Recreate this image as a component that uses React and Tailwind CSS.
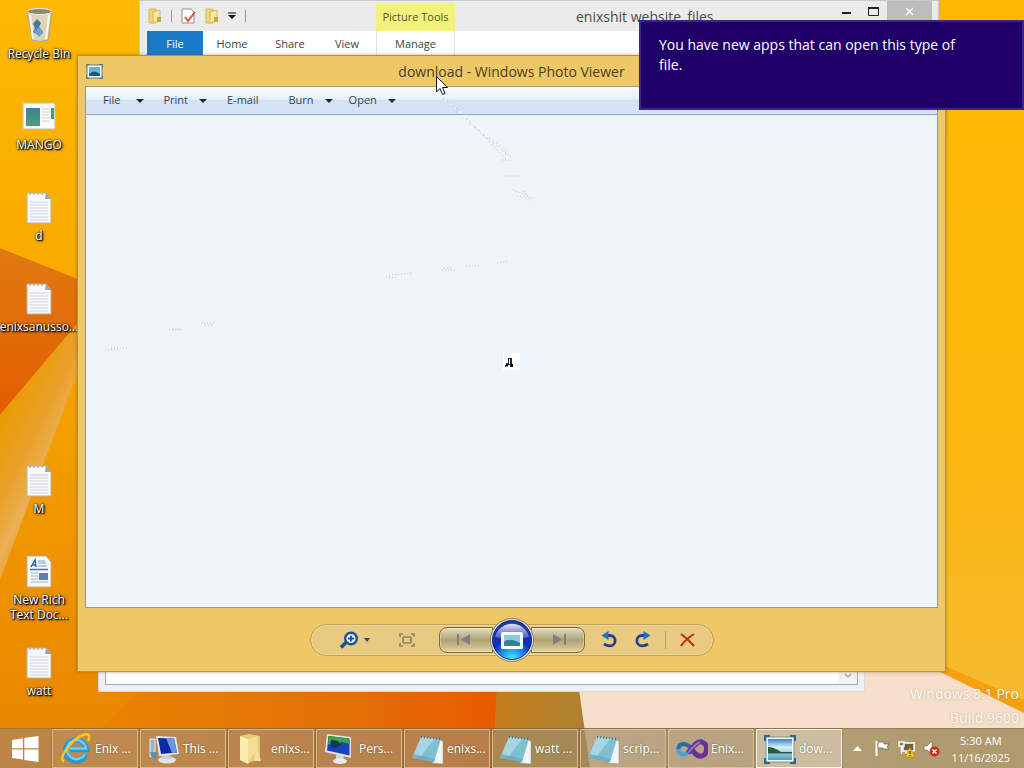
import React from "react";

const Wallpaper = () => (
  <svg
    className="absolute inset-0 h-full w-full"
    viewBox="0 0 1024 768"
    preserveAspectRatio="none"
    aria-hidden="true"
  >
    <defs>
      <linearGradient id="wallBase" x1="0" y1="0" x2="0" y2="1">
        <stop offset="0" stopColor="#feb900" />
        <stop offset="0.45" stopColor="#f7a600" />
        <stop offset="0.75" stopColor="#ee9200" />
        <stop offset="1" stopColor="#e98400" />
      </linearGradient>
      <linearGradient id="wallDark" x1="0" y1="0" x2="0" y2="1">
        <stop offset="0" stopColor="#e07a10" />
        <stop offset="1" stopColor="#e45c00" />
      </linearGradient>
      <linearGradient id="wallRay" gradientUnits="userSpaceOnUse" x1="0" y1="430" x2="60" y2="460">
        <stop offset="0" stopColor="#e99c08" />
        <stop offset="0.5" stopColor="#eaa12c" />
        <stop offset="0.85" stopColor="#ebb057" />
        <stop offset="1" stopColor="#eba540" />
      </linearGradient>
      <linearGradient id="wallFloor" gradientUnits="userSpaceOnUse" x1="90" y1="0" x2="490" y2="0">
        <stop offset="0" stopColor="#e98400" />
        <stop offset="0.6" stopColor="#e37208" />
        <stop offset="1" stopColor="#e85c00" />
      </linearGradient>
      <linearGradient id="wallBrown" x1="0" y1="0" x2="1" y2="0">
        <stop offset="0" stopColor="#c47c18" />
        <stop offset="1" stopColor="#a98236" />
      </linearGradient>
      <linearGradient id="wallRight" x1="0" y1="0" x2="0" y2="1">
        <stop offset="0" stopColor="#fdb900" />
        <stop offset="0.6" stopColor="#fcb80c" />
        <stop offset="1" stopColor="#f6ba30" />
      </linearGradient>
    </defs>
    <rect width="1024" height="768" fill="url(#wallBase)" />
    <polygon points="0,248 110,292 110,285 0,415" fill="url(#wallDark)" />
    <polygon points="0,415 110,285 0,580" fill="url(#wallRay)" />
    <polygon points="60,768 140,690 500,640 500,768" fill="url(#wallFloor)" />
    <polygon points="492,768 500,640 600,640 600,768" fill="url(#wallBrown)" />
    <polygon points="590,768 572,640 1024,640 1024,768" fill="#f5dfcb" />
    <polygon points="880,0 1024,0 1024,712 935,668 880,640" fill="url(#wallRight)" />
    <polygon points="940,664 1024,700 1024,713 940,672" fill="#f4a010" />
  </svg>
);

const RecycleBinIcon = () => (
  <svg width="36" height="36" viewBox="0 0 36 36" aria-hidden="true">
    <path d="M6 4 L31 4 L27 33 Q18 36 11 33 Z" fill="#d9dbd5" fillOpacity="0.85" stroke="#a9a48c" />
    <ellipse cx="18.500" cy="4.500" rx="12.500" ry="3" fill="#8d8873" stroke="#f0efe6" />
    <path d="M9 8 L12 32 M28 8 L25 32" stroke="#f6f6f2" strokeWidth="2" />
    <path d="M12 17 l4 -5 l4 4 l-2 4 l4 5 l-5 3 l-5 -3 l2 -4 z" fill="#3b78b8" />
    <path d="M13 24 l5 -4 l4 6 l-4 4 z" fill="#6ba0cf" />
    <path d="M15 13 l4 2 l-2 3 z" fill="#3e8b54" />
  </svg>
);

const PreviewIcon = () => (
  <svg width="36" height="36" viewBox="0 0 36 36" aria-hidden="true">
    <rect x="2" y="5" width="32" height="26" fill="#fafafa" stroke="#c8bd9e" />
    <defs>
      <linearGradient id="mango" x1="0" y1="0" x2="0" y2="1">
        <stop offset="0" stopColor="#3f7fa0" />
        <stop offset="1" stopColor="#4f9f72" />
      </linearGradient>
    </defs>
    <rect x="5" y="10" width="14" height="18" fill="url(#mango)" />
    <path d="M21 11h8M21 14h8M21 17h7M21 20h8M21 23h7" stroke="#cfd3d6" />
    <rect x="30" y="10" width="3" height="11" fill="#4c9686" />
  </svg>
);

const TextFileIcon = () => (
  <svg width="36" height="36" viewBox="0 0 36 36" aria-hidden="true">
    <path d="M6 4 H25 L30 10 V34 H6 Z" fill="#f7f8fa" stroke="#b6b3a6" />
    <path d="M25 4 L24 10 H30 Z" fill="#9aa5b0" />
    <path d="M8 5h14" stroke="#9a9a94" strokeDasharray="2 2" />
    <path d="M9 13h18M9 16h18M9 19h18M9 22h18M9 25h18M9 28h18M9 31h18" stroke="#cdd3d9" />
  </svg>
);

const RichTextIcon = () => (
  <svg width="36" height="36" viewBox="0 0 36 36" aria-hidden="true">
    <path d="M6 3 H25 L30 9 V34 H6 Z" fill="#f7f8fa" stroke="#b6b3a6" />
    <path d="M10 14 l4 -7 l1 7 M11 12h4" stroke="#2f66ad" strokeWidth="1.500" fill="none" />
    <path d="M17 8h7M17 10h8M17 13h9" stroke="#7ca0cc" />
    <path d="M9 16.500h18" stroke="#2f7fae" strokeWidth="1.500" />
    <path d="M10 20h7M10 23h7M10 26h7M10 29h17" stroke="#9db4cf" />
    <rect x="18" y="20" width="9" height="7" fill="#5b83a8" />
  </svg>
);

const desktopIcons = [
  { name: "Recycle Bin", icon: <RecycleBinIcon /> },
  { name: "MANGO", icon: <PreviewIcon /> },
  { name: "d", icon: <TextFileIcon /> },
  { name: "enixsanusso...", icon: <TextFileIcon /> },
  null,
  { name: "M", icon: <TextFileIcon /> },
  { name: "New Rich Text Doc...", icon: <RichTextIcon /> },
  { name: "watt", icon: <TextFileIcon /> },
];

const DesktopIcons = () => (
  <div className="relative flex w-[78px] flex-col">
    {desktopIcons.map((item, index) => (
      <div key={index} className="h-[91px]">
        {item && (
          <button className="flex w-full flex-col items-center pt-[7px]">
            {item.icon}
            <span className="mt-[3px] px-1 text-center text-[12px] leading-[15px] text-white [text-shadow:1px_1px_1px_#000,0_0_2px_#000,1px_1px_3px_#000]">
              {item.name}
            </span>
          </button>
        )}
      </div>
    ))}
  </div>
);

const FolderSmall = () => (
  <svg width="14" height="16" viewBox="0 0 14 16" aria-hidden="true">
    <path d="M1 1 H8 V15 H1 Z" fill="#f0d476" stroke="#d9b75a" />
    <path d="M5 4 L12 2 V13 L5 15 Z" fill="#f9e7a4" stroke="#d9b75a" />
    <path d="M9 9 h4 v5 h-4 z" fill="#c8a640" />
  </svg>
);

const ExplorerWindow = () => (
  <section className="absolute top-0 right-[85px] left-[139px] border border-[#c9c9c9] bg-[#ebebeb] pl-[7px]">
    <div className="relative flex h-[30px] items-center">
      <div className="flex items-center gap-[9px] pl-px text-[#777]">
        <FolderSmall />
        <span className="h-3 w-px bg-[#999]" />
        <svg width="15" height="16" viewBox="0 0 15 16" aria-hidden="true">
          <path d="M1 1 H10 L13 4 V15 H1 Z" fill="#fff" stroke="#8e8e96" />
          <path d="M4 9 L7 13 L14 4" stroke="#d9543c" strokeWidth="2" fill="none" />
        </svg>
        <FolderSmall />
        <svg width="8" height="8" viewBox="0 0 8 8" aria-hidden="true">
          <path d="M0 1h8" stroke="#111" />
          <path d="M0 3h8L4 7z" fill="#111" />
        </svg>
        <span className="h-3 w-px bg-[#999]" />
      </div>
      <span className="absolute bottom-0 left-[229px] flex h-[27px] w-[79px] items-center justify-center bg-[#f4f27c] text-[11px] text-[#55552a]">
        Picture Tools
      </span>
      <h2 className="absolute left-[429px] text-[14px] text-[#4a4a4a]">enixshit website_files</h2>
      <div className="absolute top-0 right-[6px] flex h-[20px] items-center">
        <button aria-label="Minimize" className="flex h-full w-[27px] items-center justify-center">
          <svg width="9" height="9" viewBox="0 0 9 9">
            <path d="M0 5h9v2H0z" fill="#222" />
          </svg>
        </button>
        <button aria-label="Maximize" className="flex h-full w-[27px] items-center justify-center">
          <svg width="11" height="9" viewBox="0 0 11 9">
            <path d="M0.500 0.500h10v8h-10z" fill="none" stroke="#222" />
            <path d="M0 0h11v2H0z" fill="#222" />
          </svg>
        </button>
        <button aria-label="Close" className="flex h-full w-[45px] items-center justify-center bg-[#bcbcbc]">
          <svg width="9" height="9" viewBox="0 0 9 9">
            <path d="M1 1l7 7M8 1l-7 7" stroke="#fff" strokeWidth="1.500" />
          </svg>
        </button>
      </div>
    </div>
    <nav className="mr-[7px] flex h-[40px] items-start bg-white text-[11px] leading-[26px] text-[#444]">
      <button className="h-[25px] w-[56px] bg-[#1979ca] text-white">File</button>
      <button className="w-[58px]">Home</button>
      <button className="w-[58px]">Share</button>
      <button className="w-[56px]">View</button>
      <button className="ml-px w-[79px] border-x border-[#e2e2e2]">Manage</button>
    </nav>
  </section>
);

const BackgroundWindow = () => (
  <section className="absolute right-[159px] bottom-[76px] left-[98px] h-[60px] border border-[#d5dde2] bg-[#ecf1f4] px-[6px] pb-[6px]">
    <div className="flex h-full items-end justify-end border border-t-0 border-[#9fa9ae] bg-white">
      <svg width="18" height="14" viewBox="0 0 18 14" className="bg-[#f0f0f0]" aria-hidden="true">
        <path d="M6 4l3 3l3 -3" stroke="#a9a9a9" strokeWidth="1.500" fill="none" />
      </svg>
    </div>
  </section>
);

const menus = [
  { name: "File", arrow: true, style: "gap-[16px] pr-[19px]" },
  { name: "Print", arrow: true, style: "gap-[11px] pr-[20px]" },
  { name: "E-mail", arrow: false, style: "pr-[30px]" },
  { name: "Burn", arrow: true, style: "gap-[11px] pr-[16px]" },
  { name: "Open", arrow: true, style: "gap-[11px]" },
];

const PhotoIcon = () => (
  <svg width="17" height="15" viewBox="0 0 17 15" aria-hidden="true">
    <rect x="1" y="1" width="15" height="13" fill="#fff" stroke="#66757a" />
    <rect x="3" y="3" width="11" height="9" fill="#66b3d4" />
    <path d="M3 10 Q8 5 14 10 V12 H3 Z" fill="#24566b" />
    <path d="M0 4V0H4M13 0H17V4M17 11V15H13M4 15H0V11" stroke="#4b7488" strokeWidth="1.500" fill="none" />
  </svg>
);

const PlayerControls = () => (
  <div className="flex h-[32px] items-center rounded-full border border-[#c2a25c] bg-[#e8ca80] shadow-[inset_0_0_0_1px_#f0d898]">
    <div className="flex w-[128px] items-center pl-[28px]">
      <button aria-label="Zoom" className="flex items-center gap-1">
        <svg width="21" height="18" viewBox="0 0 21 18">
          <path d="M7.500 11 L2 16.500" stroke="#1c4f94" strokeWidth="3.500" />
          <circle cx="12" cy="7.500" r="5.800" fill="#e8f3fb" stroke="#1d5399" strokeWidth="2.400" />
          <path d="M12 4.500v6M9 7.500h6" stroke="#1d5399" strokeWidth="1.800" />
        </svg>
        <svg width="6" height="4" viewBox="0 0 6 4">
          <path d="M0 0h6L3 4z" fill="#1f4a80" />
        </svg>
      </button>
      <button aria-label="Fit to window" className="ml-[29px]">
        <svg width="16" height="14" viewBox="0 0 16 14" fill="none" stroke="#8e8366" strokeWidth="1.600">
          <path d="M1 4V1H4M12 1H15V4M15 10V13H12M4 13H1V10" />
          <rect x="4" y="4" width="8" height="6" rx="1" />
        </svg>
      </button>
    </div>
    <div className="flex items-center">
      <button
        aria-label="Previous"
        className="flex h-[26px] w-[54px] items-center justify-center rounded-l-lg border border-[#7c6a3c] bg-linear-to-b from-[#e3dcc0] from-0% via-[#b0a272] via-50% to-[#e2d49c] pr-1 shadow-[inset_0_0_0_1px_rgba(255,250,220,0.35)]"
      >
        <svg width="15" height="11" viewBox="0 0 15 11" fill="#7d8088">
          <path d="M1 0h2v11H1zM14 0v11L5 5.500z" />
        </svg>
      </button>
      <button
        aria-label="Play slide show"
        className="relative -mx-[3px] flex size-[44px] items-center justify-center rounded-full border border-[#8f8050] bg-[#dfe3ea]"
      >
        <svg width="40" height="40" viewBox="0 0 40 40">
          <defs>
            <radialGradient id="orb" cx="0.500" cy="1" r="0.900">
              <stop offset="0" stopColor="#5fe6ff" />
              <stop offset="0.300" stopColor="#1f9bf0" />
              <stop offset="0.600" stopColor="#0b2fb4" />
              <stop offset="1" stopColor="#2138a4" />
            </radialGradient>
            <linearGradient id="orbShine" x1="0" y1="0" x2="0" y2="1">
              <stop offset="0" stopColor="#fff" stopOpacity="0.900" />
              <stop offset="1" stopColor="#8a9be0" stopOpacity="0.350" />
            </linearGradient>
          </defs>
          <circle cx="20" cy="20" r="19.500" fill="url(#orb)" stroke="#13308c" />
          <path d="M3 17 A17.500 17.500 0 0 1 37 17 Q20 22 3 17 Z" fill="url(#orbShine)" />
          <rect x="9" y="12" width="22" height="17" rx="1.500" fill="#f7fafc" />
          <rect x="12" y="15" width="16" height="11" fill="#8ccae0" />
          <path d="M12 22 Q17 17 28 23 V26 H12 Z" fill="#3a7f96" />
        </svg>
      </button>
      <button
        aria-label="Next"
        className="flex h-[26px] w-[54px] items-center justify-center rounded-r-lg border border-[#7c6a3c] bg-linear-to-b from-[#e3dcc0] from-0% via-[#b0a272] via-50% to-[#e2d49c] pl-1 shadow-[inset_0_0_0_1px_rgba(255,250,220,0.35)]"
      >
        <svg width="15" height="11" viewBox="0 0 15 11" fill="#7d8088">
          <path d="M12 0h2v11h-2zM1 0v11l9 -5.500z" />
        </svg>
      </button>
    </div>
    <div className="flex w-[128px] items-center justify-between pr-[17px] pl-[16px]">
      <button aria-label="Rotate counterclockwise">
        <svg width="16" height="17" viewBox="0 0 16 17">
          <path d="M5 4.500 H9 A5 5 0 0 1 9 14.800 Q6 15 3 13" fill="none" stroke="#22428f" strokeWidth="2.800" />
          <path d="M0.500 4.500 L7.500 0 V9 Z" fill="#1b74c4" />
        </svg>
      </button>
      <button aria-label="Rotate clockwise" className="ml-[4px]">
        <svg width="16" height="17" viewBox="0 0 16 17">
          <path d="M11 4.500 H7 A5 5 0 0 0 7 14.800 Q10 15 13 13" fill="none" stroke="#22428f" strokeWidth="2.800" />
          <path d="M15.500 4.500 L8.500 0 V9 Z" fill="#1b74c4" />
        </svg>
      </button>
      <span className="h-[18px] w-px bg-[#bda060]" />
      <button aria-label="Delete">
        <svg width="15" height="14" viewBox="0 0 15 14">
          <path d="M1 1 Q8 6 14 13 M14 1 Q6 6 1 13" stroke="#bd2a18" strokeWidth="2" fill="none" />
        </svg>
      </button>
    </div>
  </div>
);

const PhotoViewer = () => (
  <section className="absolute top-[55px] right-[78px] bottom-[96px] left-[77px] flex flex-col border border-[#b8923a] bg-[#eec867] px-[7px] shadow-[0_0_3px_rgba(120,70,0,0.5)]">
    <header className="relative flex h-[30px] shrink-0 items-center justify-center">
      <span className="absolute left-px">
        <PhotoIcon />
      </span>
      <h1 className="text-[14px] text-[#4c3f20]">download - Windows Photo Viewer</h1>
    </header>
    <div className="flex min-h-0 grow flex-col border border-[#9d9a83] bg-[#eff4f9]">
      <nav className="flex h-[28px] shrink-0 items-center border-b border-[#93a9cc] bg-linear-to-b from-[#f8fcff] from-0% via-[#e6f1fb] via-45% to-[#d3e2f4] to-50% pl-[17px] text-[11px] text-[#33465c]">
        {menus.map((menu) => (
          <button key={menu.name} className={`flex items-center ${menu.style}`}>
            {menu.name}
            {menu.arrow && (
              <svg width="8" height="4" viewBox="0 0 8 4" aria-hidden="true">
                <path d="M0 0h8L4 4z" fill="#1c2733" />
              </svg>
            )}
          </button>
        ))}
      </nav>
      <main className="flex grow items-center justify-center">
        <svg width="17" height="17" viewBox="0 0 17 17" role="img" aria-label="download">
          <rect width="17" height="17" fill="#fff" />
          <path d="M5 5h4v9H7v-2H3v-2h2z" fill="#20262b" />
          <path d="M6 6h1v5H6zM3 12h3v1H3z" fill="#fff" />
          <path d="M2 12h3v1.500H2zM8 11h2v3H8z" fill="#000" />
        </svg>
      </main>
    </div>
    <footer className="flex h-[63px] shrink-0 items-center justify-center">
      <PlayerControls />
    </footer>
  </section>
);

// faint specks left behind by the pointer
const PointerTrail = () => (
  <svg className="pointer-events-none absolute top-0 left-0" width="560" height="370" viewBox="0 0 560 370" aria-hidden="true">
    <g fill="none" stroke="#aab3ba" strokeWidth="1" opacity="0.700">
      <path d="M443 98 l9 5 M449 105 l14 7" strokeDasharray="1 3" />
      <path d="M454 109 L510 157 M464 115 L508 161 M470 124 L508 152" strokeDasharray="1 3" />
      <path d="M482 134 L512 158 M502 160 h8" strokeDasharray="1 2" />
      <path d="M507 176 h12 M513 190 l22 9 M517 195 l16 5 M524 191 l6 9" strokeDasharray="1 2" />
      <path d="M386 277 l12 1 M389 275 l24 -2" strokeDasharray="1 2" />
      <path d="M442 270 h14 M444 268 h9 M466 266 h14 M497 263 l11 -2" strokeDasharray="1 2" />
      <path d="M105 350 l15 -1 M111 348 h16" strokeDasharray="1 2" />
      <path d="M169 330 h14 M173 329 h8 M201 323 h14 M205 325 h8" strokeDasharray="1 2" />
    </g>
    <g fill="none" stroke="#fff" strokeWidth="1">
      <path d="M445 100 L508 156 M460 111 L512 160" strokeDasharray="2 4" />
      <path d="M512 192 l22 8" strokeDasharray="2 3" />
    </g>
  </svg>
);

const Cursor = () => (
  <svg className="pointer-events-none absolute top-[75px] left-[435px]" width="14" height="21" viewBox="0 0 14 21" aria-hidden="true">
    <path d="M1.500 1.500 V17 L5 13.500 L7.500 19.500 L10 18.500 L7.500 12.500 H12.500 Z" fill="#fff" stroke="#111" />
  </svg>
);

const WindowsLogo = () => (
  <svg width="28" height="26" viewBox="0 0 28 26" fill="#fff" aria-hidden="true">
    <path d="M1 4 L12 2.300 V12.300 H1 Z M13.300 2.100 L27.500 0 V12.300 H13.300 Z M1 13.600 H12 V23.600 L1 22 Z M13.300 13.600 H27.500 V26 L13.300 23.900 Z" />
  </svg>
);

const InternetIcon = () => (
  <svg width="32" height="32" viewBox="0 0 32 32" aria-hidden="true">
    <path d="M26 21 A10.500 10.500 0 1 1 26.500 16.500 H10" fill="none" stroke="#2c97d4" strokeWidth="5.500" />
    <path d="M25 21 A9.500 9.500 0 1 1 26 15.500 H10" fill="none" stroke="#6dcdf1" strokeWidth="2.500" />
    <path d="M4 29 Q-1 26 8 14 Q17 3 26 1 Q31 1 28 8" fill="none" stroke="#f5c82c" strokeWidth="2.500" />
  </svg>
);

const ComputerIcon = () => (
  <svg width="32" height="32" viewBox="0 0 32 32" aria-hidden="true">
    <path d="M2 6 H7 V22 L2 24 Z" fill="#9fb2c6" stroke="#e7edf2" />
    <ellipse cx="19" cy="27" rx="9" ry="3.500" fill="#dfe5ea" />
    <path d="M15 20 h7 l1 6 h-9 z" fill="#c6ced6" />
    <path d="M8 3 L28 4 L31 21 L11 23 Z" fill="#dfe8ef" />
    <path d="M10 5 L26 5.500 L29 19.500 L13 21 Z" fill="#0c2ba0" />
    <path d="M18 5 L26 5.500 L29 19.500 L24 20 Z" fill="#6a96e4" />
    <path d="M2 19 H9 V25 H4 Z" fill="#7089a8" />
  </svg>
);

const FolderIcon = () => (
  <svg width="32" height="32" viewBox="0 0 32 32" aria-hidden="true">
    <path d="M4 3 L13 1 L24 3 V26 L12 30 L4 27 Z" fill="#e2ca78" />
    <path d="M4 3 L12 6 V31 L4 27 Z" fill="#f8ecae" />
    <path d="M12 6 L22 3 V18 L25 28 L18 28 V20 L12 31 Z" fill="#f2df94" />
  </svg>
);

const MonitorIcon = () => (
  <svg width="32" height="32" viewBox="0 0 32 32" aria-hidden="true">
    <path d="M12 20 h7 l1 8 h-8 z" fill="#cdd4d9" />
    <ellipse cx="16" cy="28" rx="7" ry="3" fill="#e6eaec" />
    <path d="M3 1 L27 4 L27 25 L1 19 Z" fill="#e0e4e8" />
    <path d="M4.500 3 L25.500 5.500 L25.500 22.500 L3 17.500 Z" fill="#1a3fc0" />
    <path d="M4.500 3 L25.500 5.500 V11 L17 9 L12 14 L4 11 Z" fill="#3ca540" />
    <path d="M7 7 l7 1 l3 4 l-5 3 l-6 -2 z" fill="#10385c" />
  </svg>
);

const NotepadIcon = () => (
  <svg width="32" height="32" viewBox="0 0 32 32" aria-hidden="true">
    <path d="M27 7 L31 8 L31 31 L20 30 Z" fill="#f4f6f6" stroke="#8b9899" strokeWidth="0.600" />
    <path d="M9 4 L29 6 L22 29 L0 25 Z" fill="#7fbfd2" />
    <path d="M9 4 L23 5.500 L9 23 L0 25 Z" fill="#b4dfea" opacity="0.700" />
    <path d="M0 25 L22 29 L23 26 L2 21 Z" fill="#5fa3b8" opacity="0.600" />
    <path d="M9 4 L29 6" stroke="#47707e" strokeWidth="2" strokeDasharray="1 2" />
  </svg>
);

const InfinityIcon = () => (
  <svg width="32" height="32" viewBox="0 0 32 32" fill="none" aria-hidden="true">
    <path d="M16 17 C12 10 2 9 2.500 17 C3 24 11 22 16 17" stroke="#4aa3d8" strokeWidth="4" />
    <path d="M2.500 16 C2 10 10 9 16 16" stroke="#276ba3" strokeWidth="4" />
    <path d="M12 20 C19 11 22 8 26 9 C32 11 32 21 26 23 C21 24 18 20 15 15" stroke="#6a2f98" strokeWidth="5" />
    <path d="M12 20 C17 14 20 10 24 9" stroke="#8a75c8" strokeWidth="2" />
  </svg>
);

const PhotoTaskIcon = () => (
  <svg width="32" height="32" viewBox="0 0 32 32" aria-hidden="true">
    <defs>
      <linearGradient id="sky" x1="0" y1="0" x2="0" y2="1">
        <stop offset="0" stopColor="#2e86d2" />
        <stop offset="0.400" stopColor="#dcf0f8" />
        <stop offset="0.600" stopColor="#a8d4dc" />
        <stop offset="1" stopColor="#4b9fb8" />
      </linearGradient>
    </defs>
    <rect x="2" y="4" width="28" height="25" fill="#f4f9fb" stroke="#6c93a9" />
    <rect x="4" y="6" width="24" height="21" fill="url(#sky)" />
    <path d="M4 14 Q10 14 17 19 H28 V20.500 H4 Z" fill="#2d5a48" />
    <path d="M1 8V3H6M26 3H31V8M31 25V30H26M6 30H1V25" stroke="#2c6797" strokeWidth="2" fill="none" />
  </svg>
);

const tasks = [
  { name: "Enix ...", icon: <InternetIcon /> },
  { name: "This ...", icon: <ComputerIcon /> },
  { name: "enixs...", icon: <FolderIcon /> },
  { name: "Pers...", icon: <MonitorIcon /> },
  { name: "enixs...", icon: <NotepadIcon /> },
  { name: "watt ...", icon: <NotepadIcon /> },
  { name: "scrip...", icon: <NotepadIcon /> },
  { name: "Enix...", icon: <InfinityIcon /> },
  { name: "dow...", icon: <PhotoTaskIcon />, active: true },
];

const Taskbar = () => (
  <footer className="relative mt-auto flex h-[40px] items-stretch border-t border-[#8a6a3a]/60 bg-linear-to-r from-[#9e8475]/60 to-[#97834d]/75">
    <button aria-label="Start" className="flex w-[50px] items-center justify-center">
      <WindowsLogo />
    </button>
    <div className="ml-[2px] flex gap-[2px]">
      {tasks.map((task, index) => (
        <button
          key={index}
          className={`flex w-[86px] items-center gap-[3px] border pl-[7px] text-[12px] whitespace-nowrap text-white outline outline-[#6b5430]/30 ${
            task.active ? "border-[#fdf6e0] bg-[#ece4d4]/45" : "border-[#e8cf9c]/70 bg-white/5"
          }`}
        >
          {task.icon}
          <span className="[text-shadow:0_0_2px_rgba(60,40,0,0.5)]">{task.name}</span>
        </button>
      ))}
    </div>
    <div className="ml-auto flex items-center pr-[14px]">
      <button aria-label="Show hidden icons">
        <svg width="9" height="5" viewBox="0 0 9 5">
          <path d="M0 5h9L4.500 0z" fill="#fff" />
        </svg>
      </button>
      <svg className="ml-[12px]" width="17" height="17" viewBox="0 0 17 17" aria-hidden="true">
        <path d="M2.500 1v15" stroke="#fff" strokeWidth="2" />
        <path d="M4 2h6v2h5l-2 3l2 2H9V8H4z" fill="#fff" stroke="#5b4a2c" strokeWidth="0.600" />
      </svg>
      <svg className="ml-[7px]" width="18" height="18" viewBox="0 0 18 18" aria-hidden="true">
        <rect x="5" y="3" width="11" height="8" fill="#6d5d3c" stroke="#fff" strokeWidth="1.500" />
        <path d="M1 2h5v4H1zM3.500 6v8M7 13h8" stroke="#fff" strokeWidth="1.500" fill="#8b7a52" />
        <path d="M12 7 L17 17 H7 Z" fill="#f6c51f" stroke="#a97d0a" strokeWidth="0.600" />
        <path d="M12 11v3M12 15v1" stroke="#4d3a00" strokeWidth="1.200" />
      </svg>
      <svg className="ml-[7px]" width="17" height="17" viewBox="0 0 17 17" aria-hidden="true">
        <path d="M1 6h3l5 -5v14l-5 -5H1z" fill="#fff" stroke="#6b5a38" strokeWidth="0.600" />
        <circle cx="11.500" cy="11.500" r="5" fill="#d3281c" />
        <path d="M9.500 9.500l4 4M13.500 9.500l-4 4" stroke="#fff" strokeWidth="1.500" />
      </svg>
      <div className="ml-[12px] text-center text-[11px] leading-[17px] text-white">
        <p>5:30 AM</p>
        <p>11/16/2025</p>
      </div>
    </div>
  </footer>
);

const App = () => {
  return (
    <div className="relative flex min-h-screen w-full flex-col overflow-hidden bg-[#feb900] font-['Open_Sans','Noto_Sans',sans-serif]">
      <Wallpaper />
      <DesktopIcons />

      {/* Watermark */}
      <div className="absolute right-[5px] bottom-[38px] text-right text-[14px] leading-[24px] text-white/90 [text-shadow:0_0_2px_rgba(150,110,70,0.5)]">
        <p>Windows 8.1 Pro</p>
        <p>Build 9600</p>
      </div>

      {/* Windows, back to front */}
      <ExplorerWindow />
      <BackgroundWindow />
      <PhotoViewer />
      <PointerTrail />

      {/* Notification */}
      <aside className="absolute top-[20px] right-0 h-[90px] w-[385px] border-2 border-[#3c2482] bg-[#1f0068] px-[18px] py-[13px] text-[14px] leading-[20px] text-white">
        <p className="max-w-[310px]">You have new apps that can open this type of file.</p>
      </aside>

      <Cursor />
      <Taskbar />
    </div>
  );
};

export default App;
